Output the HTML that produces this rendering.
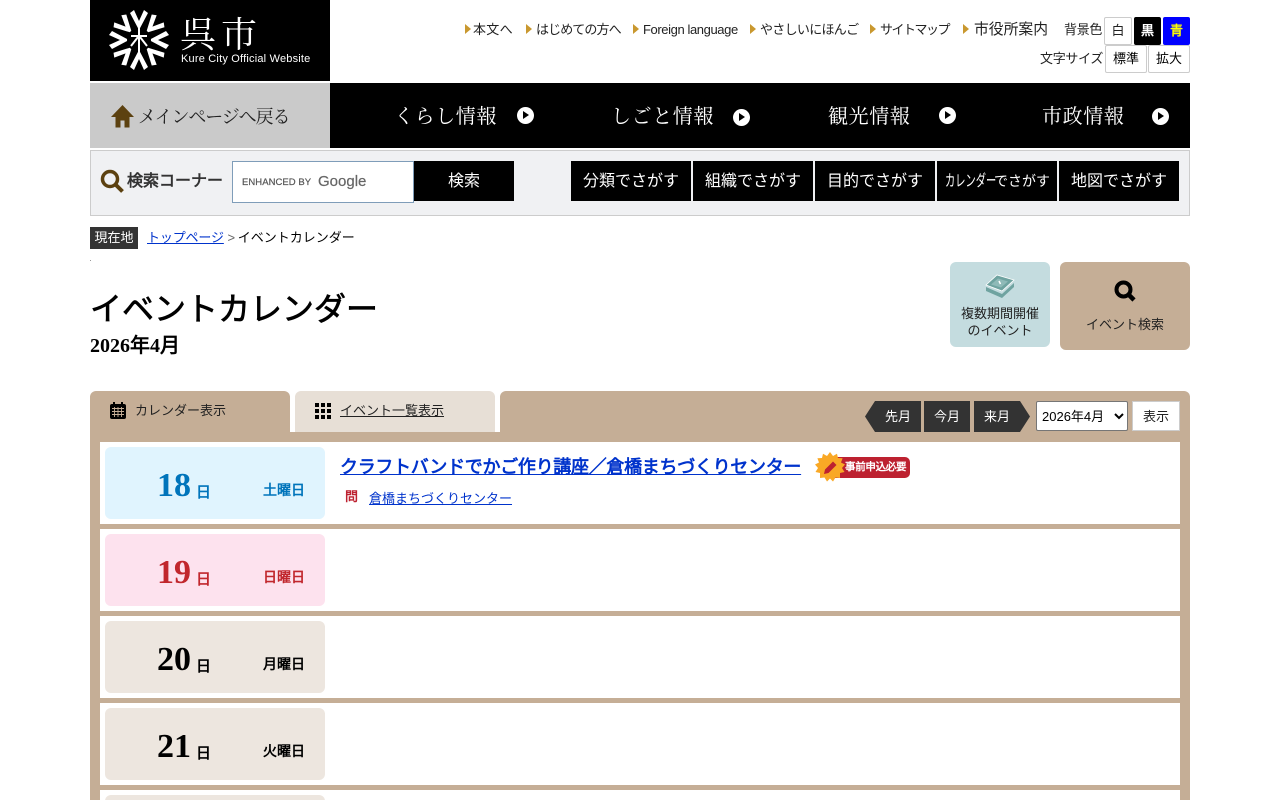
<!DOCTYPE html>
<html lang="ja"><head><meta charset="utf-8"><title>イベントカレンダー</title>
<style>
html,body{margin:0;padding:0;background:#fff;width:1280px;height:800px;overflow:hidden}
body{position:relative;font-family:"Liberation Sans","WenQuanYi Zen Hei",sans-serif;font-size:13px;color:#000}
.a{position:absolute;white-space:nowrap}
.b{position:absolute;box-sizing:border-box}
.tl{font-size:13px;color:#222;top:22px;line-height:16px}
.tr{position:absolute;top:24px;width:0;height:0;border-left:6px solid #c9982f;border-top:5px solid transparent;border-bottom:5px solid transparent}
.sb{position:absolute;box-sizing:border-box;background:#fff;border:1px solid #ccc;text-align:center;font-size:13px;line-height:26px;border-radius:2px}
.nav{font-family:"Noto Serif CJK SC","Noto Serif CJK JP",serif;font-size:20px;color:#fff;top:101px;line-height:28px;letter-spacing:.6px}
.ci{position:absolute;top:107px;width:17px;height:17px;border-radius:50%;background:#fff}
.ci:after{content:"";position:absolute;left:6px;top:4px;border-left:6px solid #000;border-top:4.5px solid transparent;border-bottom:4.5px solid transparent}
.sbtn{position:absolute;top:161px;width:120px;height:40px;background:#000;color:#fff;text-align:center;font-size:16px;line-height:41px;white-space:nowrap;overflow:hidden}
.row{position:absolute;left:100px;width:1080px;height:82px;background:#fff}
.d{position:absolute;left:105px;width:220px;height:72px;border-radius:6px;background:#ede6df}
.n{position:absolute;left:157px;font:bold 34px/40px "Liberation Serif",serif}
.u{position:absolute;left:196px;font:bold 15px/20px "Liberation Sans","WenQuanYi Zen Hei",sans-serif}
.w{position:absolute;left:263px;font:bold 14px/20px "Liberation Sans","WenQuanYi Zen Hei",sans-serif}
a{color:#0033cc}
</style></head><body>

<!-- header logo -->
<div class="b" style="left:90px;top:0;width:240px;height:81px;background:#000"></div>
<svg class="b" style="left:108px;top:9px" width="62" height="62" viewBox="-31 -31 62 62">
<g fill="#fff">
<polygon points="-9,-27 -5,-30 0,-19 5,-30 9,-27 0,-10"/>
<polygon transform="rotate(45)" points="-9,-27 -5,-30 0,-19 5,-30 9,-27 0,-10"/>
<polygon transform="rotate(90)" points="-9,-27 -5,-30 0,-19 5,-30 9,-27 0,-10"/>
<polygon transform="rotate(135)" points="-9,-27 -5,-30 0,-19 5,-30 9,-27 0,-10"/>
<polygon transform="rotate(180)" points="-9,-27 -5,-30 0,-19 5,-30 9,-27 0,-10"/>
<polygon transform="rotate(225)" points="-9,-27 -5,-30 0,-19 5,-30 9,-27 0,-10"/>
<polygon transform="rotate(270)" points="-9,-27 -5,-30 0,-19 5,-30 9,-27 0,-10"/>
<polygon transform="rotate(315)" points="-9,-27 -5,-30 0,-19 5,-30 9,-27 0,-10"/>
</g>
<circle r="12" fill="#000"/>
<g stroke="#fff" stroke-width="2" fill="none"><path d="M-8 -4H8M0 -12V12M-1 -3L-8 6M1 -3L8 6"/></g>
</svg>
<div class="a" style="left:180px;top:10px;font:36px/46px 'Noto Serif CJK SC',serif;color:#fff;letter-spacing:5px">呉市</div>
<div class="a" style="left:181px;top:52px;font-size:11px;line-height:14px;color:#fff;letter-spacing:.2px">Kure City Official Website</div>

<!-- top links -->
<i class="tr" style="left:465px"></i><div class="a tl" style="left:473px;letter-spacing:.3px">本文へ</div>
<i class="tr" style="left:526px"></i><div class="a tl" style="left:536px;letter-spacing:-.9px">はじめての方へ</div>
<i class="tr" style="left:633px"></i><div class="a tl" style="left:643px;letter-spacing:-.4px">Foreign language</div>
<i class="tr" style="left:750px"></i><div class="a tl" style="left:760px;letter-spacing:-.7px">やさしいにほんご</div>
<i class="tr" style="left:870px"></i><div class="a tl" style="left:880px;letter-spacing:-1.500px">サイトマップ</div>
<i class="tr" style="left:963px"></i><div class="a tl" style="left:974px;font-size:14.800px">市役所案内</div>
<div class="a tl" style="left:1064px;letter-spacing:-.3px">背景色</div>
<div class="sb" style="left:1104px;top:17px;width:28px;height:28px;color:#222">白</div>
<div class="sb" style="left:1134px;top:17px;width:27px;height:28px;background:#000;color:#fff;font-weight:bold;border-color:#000">黒</div>
<div class="sb" style="left:1163px;top:17px;width:27px;height:28px;background:#00f;color:#ff0;font-weight:bold;border-color:#00f">青</div>
<div class="a tl" style="left:1040px;top:51px;letter-spacing:-.3px">文字サイズ</div>
<div class="sb" style="left:1105px;top:45px;width:42px;height:28px">標準</div>
<div class="sb" style="left:1148px;top:45px;width:42px;height:28px">拡大</div>

<!-- main nav -->
<div class="b" style="left:90px;top:83px;width:240px;height:65px;background:#cacaca"></div>
<svg class="b" style="left:111px;top:105px" width="23" height="23" viewBox="0 0 23 23"><path fill="#5c4110" d="M11.500 0L23 12H18.500V22.500H13.500V15.500H9.500V22.500H4.500V12H0Z"/></svg>
<div class="a" style="left:138px;top:102px;font:18px/28px 'Noto Serif CJK SC',serif;color:#222;letter-spacing:-1.100px">メインページへ戻る</div>
<div class="b" style="left:330px;top:83px;width:860px;height:65px;background:#000"></div>
<div class="a nav" style="left:394px">くらし情報</div><i class="ci" style="left:517px"></i>
<div class="a nav" style="left:611px">しごと情報</div><i class="ci" style="left:733px;top:109px"></i>
<div class="a nav" style="left:828px">観光情報</div><i class="ci" style="left:939px"></i>
<div class="a nav" style="left:1042px">市政情報</div><i class="ci" style="left:1152px;top:108px"></i>

<!-- search bar -->
<div class="b" style="left:90px;top:150px;width:1100px;height:66px;background:#f0f1f3;border:1px solid #ccc"></div>
<svg class="b" style="left:100px;top:169px" width="25" height="25" viewBox="0 0 25 25"><circle cx="10" cy="10" r="7.500" fill="none" stroke="#5c4110" stroke-width="3.500"/><path d="M15.500 15.500L22.500 22.500" stroke="#5c4110" stroke-width="4"/></svg>
<div class="a" style="left:127px;top:171px;font-size:16px;line-height:22px;font-weight:bold;color:#333">検索コーナー</div>
<div class="b" style="left:232px;top:161px;width:182px;height:42px;background:#fff;border:1px solid #7f9db9"></div>
<div class="a" style="left:242px;top:176px;font-size:9.500px;line-height:14px;color:#555;letter-spacing:.05px;-webkit-text-stroke:.2px #555">ENHANCED BY</div>
<div class="a" style="left:318px;top:172px;font-size:15px;line-height:20px;color:#666;-webkit-text-stroke:.2px #666">Google</div>
<div class="b" style="left:414px;top:161px;width:100px;height:40px;background:#000;color:#fff;text-align:center;font-size:16px;line-height:41px">検索</div>
<div class="sbtn" style="left:571px">分類でさがす</div>
<div class="sbtn" style="left:693px">組織でさがす</div>
<div class="sbtn" style="left:815px">目的でさがす</div>
<div class="sbtn" style="left:937px;text-align:left"><span style="position:absolute;left:8px;top:0;display:block;transform:scaleX(.64);transform-origin:0 50%">カレンダー</span><span style="position:absolute;left:57px;top:0;font-size:14px">でさがす</span></div>
<div class="sbtn" style="left:1059px">地図でさがす</div>

<!-- breadcrumb -->
<div class="b" style="left:90px;top:227px;width:48px;height:22px;background:#333;color:#fff;text-align:center;font-size:13px;line-height:21px">現在地</div>
<div class="a" style="left:147px;top:229px;font-size:13px;line-height:18px"><a href="#" style="letter-spacing:-.15px">トップページ</a> <span style="color:#666">&gt;</span> <span style="margin-left:-1px">イベントカレンダー</span></div>
<div class="b" style="left:90px;top:260px;width:1px;height:1px;background:#999"></div>

<!-- title -->
<div class="a" style="left:90px;top:286px;font:400 32px/46px 'Liberation Serif','WenQuanYi Zen Hei',sans-serif;-webkit-text-stroke:.7px #000">イベントカレンダー</div>
<div class="a" style="left:90px;top:332px;font:bold 20px/28px 'Liberation Serif','WenQuanYi Zen Hei',serif">2026年4月</div>

<!-- side buttons -->
<div class="b" style="left:950px;top:262px;width:100px;height:85px;background:#c4dcdf;border-radius:6px"></div>
<svg class="b" style="left:985px;top:274px" width="30" height="26" viewBox="0 0 30 26"><path d="M1 13L17 20L29 9V13L17 24L1 17Z" fill="#6fa3a0"/><path d="M1 11L12 1L29 6L17 17Z" fill="#6fa3a0" stroke="#fff" stroke-width=".8"/><path d="M6 10.500L13 4.500L23 7.500L16 13.500Z" fill="#8fbab8"/><path d="M14 7L15.500 10" stroke="#fff" stroke-width="1.500"/></svg>
<div class="a" style="left:950px;top:305px;width:100px;text-align:center;font-size:13px;line-height:17px;white-space:normal;color:#222">複数期間開催<br>のイベント</div>
<div class="b" style="left:1060px;top:262px;width:130px;height:88px;background:#c5ae96;border-radius:6px"></div>
<svg class="b" style="left:1113px;top:279px" width="24" height="24" viewBox="0 0 24 24"><circle cx="10.500" cy="10.500" r="7" fill="none" stroke="#000" stroke-width="4"/><path d="M15.500 15.500L21 21" stroke="#000" stroke-width="4.500"/></svg>
<div class="a" style="left:1060px;top:315px;width:130px;text-align:center;font-size:13px;line-height:19px;color:#222">イベント検索</div>

<!-- calendar panel -->
<div class="b" style="left:90px;top:432px;width:1100px;height:368px;background:#c5ae96"></div>
<div class="b" style="left:90px;top:391px;width:200px;height:42px;background:#c5ae96;border-radius:6px 6px 0 0"></div>
<div class="b" style="left:295px;top:391px;width:200px;height:41px;background:#e7dfd6;border-radius:6px 6px 0 0"></div>
<div class="b" style="left:500px;top:391px;width:690px;height:42px;background:#c5ae96;border-radius:6px 6px 0 0"></div>
<svg class="b" style="left:110px;top:402px" width="16" height="17" viewBox="0 0 16 17"><rect x="0" y="2" width="16" height="15" rx="2" fill="#000"/><rect x="3" y="0" width="2" height="4" fill="#000"/><rect x="11" y="0" width="2" height="4" fill="#000"/><path d="M2 6.500H14M2 9.500H14M2 12.500H14M4.500 5V15M8 5V15M11.500 5V15" stroke="#c5ae96" stroke-width=".9"/></svg>
<div class="a" style="left:135px;top:402px;font-size:13px;line-height:18px;color:#222">カレンダー表示</div>
<svg class="b" style="left:315px;top:403px" width="16" height="16" viewBox="0 0 16 16"><path fill="#000" d="M0 0h4v4H0zM6 0h4v4H6zM12 0h4v4h-4zM0 6h4v4H0zM6 6h4v4H6zM12 6h4v4h-4zM0 12h4v4H0zM6 12h4v4H6zM12 12h4v4h-4z"/></svg>
<div class="a" style="left:340px;top:402px;font-size:13px;line-height:18px;text-decoration:underline;color:#222">イベント一覧表示</div>

<!-- pager -->
<svg class="b" style="left:865px;top:401px" width="166" height="31" viewBox="0 0 166 31"><polygon fill="#333" points="0,15.500 10,0 56,0 56,31 10,31"/><rect x="59" y="0" width="46" height="31" fill="#333"/><polygon fill="#333" points="109,0 155,0 165,15.500 155,31 109,31"/></svg>
<div class="a" style="left:885px;top:401px;color:#fff;font-size:13px;line-height:31px">先月</div>
<div class="a" style="left:934px;top:401px;color:#fff;font-size:13px;line-height:31px">今月</div>
<div class="a" style="left:984px;top:401px;color:#fff;font-size:13px;line-height:31px">来月</div>
<div class="b" style="left:1036px;top:401px;width:92px;height:30px;background:#fff;border:1px solid #767676;border-radius:2px;font-size:13px;line-height:29px;padding-left:5px">2026年4月</div>
<svg class="b" style="left:1114px;top:413px" width="10" height="7" viewBox="0 0 10 7"><path d="M1 1L5 5L9 1" fill="none" stroke="#000" stroke-width="2"/></svg>
<div class="b" style="left:1132px;top:401px;width:48px;height:30px;background:#fff;border:1px solid #ccc;text-align:center;font-size:13px;line-height:29px;color:#222">表示</div>

<!-- rows -->
<div class="row" style="top:442px"></div>
<div class="row" style="top:529px"></div>
<div class="row" style="top:616px"></div>
<div class="row" style="top:703px"></div>
<div class="row" style="top:790px"></div>

<div class="d" style="top:447px;background:#e0f4fe"></div>
<div class="n" style="top:466px;color:#0074bb">18</div><div class="u" style="top:483px;color:#0074bb">日</div><div class="w" style="top:480px;color:#0074bb">土曜日</div>
<div class="d" style="top:534px;background:#fde2ee"></div>
<div class="n" style="top:553px;color:#c1272d">19</div><div class="u" style="top:570px;color:#c1272d">日</div><div class="w" style="top:567px;color:#c1272d">日曜日</div>
<div class="d" style="top:621px"></div>
<div class="n" style="top:640px">20</div><div class="u" style="top:657px">日</div><div class="w" style="top:654px">月曜日</div>
<div class="d" style="top:708px"></div>
<div class="n" style="top:727px">21</div><div class="u" style="top:744px">日</div><div class="w" style="top:741px">火曜日</div>
<div class="d" style="top:795px"></div>

<!-- event -->
<div class="a" style="left:340px;top:455px;font-size:18px;line-height:25px;font-weight:bold;letter-spacing:-.3px"><a href="#">クラフトバンドでかご作り講座／倉橋まちづくりセンター</a></div>
<div class="b" style="left:830px;top:457px;width:80px;height:21px;background:#bd2130;border-radius:5px"></div>
<svg class="b" style="left:815px;top:452px" width="30" height="30" viewBox="-15 -15 30 30"><polygon fill="#f9a825" points="0,-15 3,-11 7,-13.200 8,-9 12.600,-8.800 11,-4.500 15,-2.500 12,1 14.500,5 10,6 10,11 5.500,10.500 3,14.500 0,11.500 -3,14.500 -5.500,10.500 -10,11 -10,6 -14.500,5 -12,1 -15,-2.500 -11,-4.500 -12.600,-8.800 -8,-9 -7,-13.200 -3,-11"/><path d="M-6 7L-5 2.500L3 -5.500L6.500 -2L-1.500 6Z" fill="#bd2130"/></svg>
<div class="a" style="left:845px;top:460px;font-size:10.500px;line-height:15px;font-weight:bold;color:#fff;letter-spacing:-.3px">事前申込必要</div>
<div class="a" style="left:345px;top:489px;font-size:13px;line-height:15px;font-weight:bold;color:#bd2130">問</div>
<div class="a" style="left:369px;top:490px;font-size:13px;line-height:18px"><a href="#">倉橋まちづくりセンター</a></div>

</body></html>
